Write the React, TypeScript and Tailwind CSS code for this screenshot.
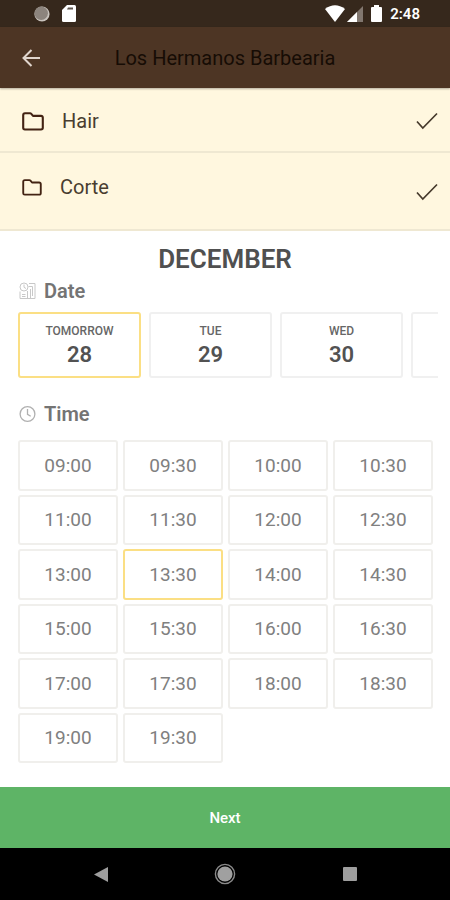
import { useState } from 'react';

const days = [
  { label: 'TOMORROW', day: '28' },
  { label: 'TUE', day: '29' },
  { label: 'WED', day: '30' },
];

const times = [
  '09:00', '09:30', '10:00', '10:30',
  '11:00', '11:30', '12:00', '12:30',
  '13:00', '13:30', '14:00', '14:30',
  '15:00', '15:30', '16:00', '16:30',
  '17:00', '17:30', '18:00', '18:30',
  '19:00', '19:30',
];

function FolderIcon({ className }: { className: string }) {
  return (
    <svg viewBox="0 0 22 19" className={className} fill="none" stroke="#432313" strokeWidth="2.1" strokeLinejoin="round">
      <path d="M1.2 3.2V15.8Q1.2 17.5 2.9 17.5H19Q20.8 17.5 20.8 15.8V5.6Q20.8 3.9 19 3.9H11L9.3 1.9Q8.8 1.3 8 1.3H3Q1.2 1.3 1.2 3.2Z" />
    </svg>
  );
}

function CheckIcon() {
  return (
    <svg viewBox="0 0 22 18" className="h-[18px] w-[22px]" fill="none" stroke="#463a2c" strokeWidth="1.7">
      <path d="M1 9.5 6.8 16 21 1.5" />
    </svg>
  );
}

function CalendarIcon() {
  return (
    <svg viewBox="0 0 18 18" className="size-[18px]" fill="none" stroke="#c8c8c8" strokeWidth="1">
      <circle cx="6" cy="5" r="4" />
      <path d="M6 2.5V5.3L8 6.5M11 1.5H17V16.5H2V9.5M4 12.5H7.5M4 14.5H7.5M9.5 9V16M12.5 7V16M10.5 4.5H14.5M14.5 4.5V14" />
    </svg>
  );
}

function ClockIcon() {
  return (
    <svg viewBox="0 0 18 18" className="size-[18px]" fill="none" stroke="#b0b0b0" strokeWidth="1.3">
      <circle cx="9.5" cy="9" r="7.4" />
      <path d="M9.5 4V9.3L12.7 11.3" />
    </svg>
  );
}

function StatusBar() {
  return (
    <div className="flex h-[27px] items-center justify-between bg-[#36281c] pr-[30px] pl-[34px]">
      <div className="flex items-center gap-3">
        <svg viewBox="0 0 16 16" className="size-4">
          <circle cx="8" cy="8" r="7.6" fill="#c9c3bd" />
          <circle cx="7.2" cy="7.2" r="6.7" fill="#8c847d" />
        </svg>
        <svg viewBox="0 0 14 17" className="h-[17px] w-[14px]">
          <path d="M5 0H12.5Q14 0 14 1.5V15.5Q14 17 12.5 17H1.5Q0 17 0 15.5V5Z" fill="#fff" />
          <path d="M6 2.5H11V4.5H5Z" fill="#5e554d" />
        </svg>
      </div>
      <div className="flex items-center">
        <svg viewBox="0 0 20 17" className="h-[17px] w-5" fill="#fff">
          <path d="M0 4Q10-3.5 20 4L10 17Z" />
        </svg>
        <svg viewBox="0 0 16 16" className="ml-[2px] size-4">
          <path d="M16 0V16H0Z" fill="#81776f" />
          <path d="M10 6V16H0Z" fill="#fff" />
        </svg>
        <svg viewBox="0 0 11 17" className="ml-2 h-[17px] w-[11px]" fill="#fff">
          <path d="M3 0H8V2H10Q11 2 11 3V16Q11 17 10 17H1Q0 17 0 16V3Q0 2 1 2H3Z" />
        </svg>
        <span className="ml-2 pt-[2px] text-[15px] font-semibold text-white">2:48</span>
      </div>
    </div>
  );
}

function NavBar() {
  return (
    <nav className="grid h-[52px] grid-cols-[1fr_50px_1fr] items-center bg-black">
      <button type="button" aria-label="Back" className="mr-[92px] justify-self-end">
        <svg viewBox="0 0 14 15" className="h-[15px] w-[14px]" fill="#9e9e9e">
          <path d="M14 0V15L0 7.5Z" />
        </svg>
      </button>
      <button type="button" aria-label="Home" className="justify-self-center">
        <svg viewBox="0 0 22 22" className="size-[22px]">
          <circle cx="11" cy="11" r="9.6" fill="none" stroke="#8a8a8a" strokeWidth="1.4" />
          <circle cx="11" cy="11" r="7.6" fill="#a0a0a0" />
        </svg>
      </button>
      <button type="button" aria-label="Recent apps" className="ml-[93px] justify-self-start">
        <svg viewBox="0 0 14 14" className="size-[14px]" fill="#9e9e9e">
          <rect width="14" height="14" rx="1" />
        </svg>
      </button>
    </nav>
  );
}

export default function App() {
  const [selectedDay, setSelectedDay] = useState('28');
  const [selectedTime, setSelectedTime] = useState('13:30');

  return (
    <div className="flex min-h-screen flex-col bg-white font-[Roboto,sans-serif]">
      <StatusBar />

      <header className="relative z-10 grid h-[61px] grid-cols-[62px_1fr_62px] items-center bg-[#4d3524] shadow-[0_1px_2px_rgba(0,0,0,0.3)]">
        <button type="button" aria-label="Go back" className="pl-[22px]">
          <svg viewBox="0 0 18 18" className="size-[18px]" fill="none" stroke="#e0d5cd" strokeWidth="2">
            <path d="M18 9H1.8M9.5 1 1.5 9 9.5 17" />
          </svg>
        </button>
        <h1 className="text-center text-xl text-[#160c05]">Los Hermanos Barbearia</h1>
      </header>

      {/* Chosen category and service */}
      <div className="flex h-[65px] items-center border-b-2 border-[#efe8d2] bg-[#fff7df] pt-[3px] pr-3 pl-[22px]">
        <FolderIcon className="h-[19px] w-[22px]" />
        <span className="ml-[18px] flex-1 text-xl text-[#493d30]">Hair</span>
        <CheckIcon />
      </div>
      <div className="flex h-[78px] items-center border-b-2 border-[#efe8d2] bg-[#fff7df] pt-[2px] pr-3 pl-[22px]">
        <div className="flex flex-1 items-center pb-[10px]">
          <FolderIcon className="h-[17px] w-5" />
          <span className="ml-[18px] text-xl text-[#493d30]">Corte</span>
        </div>
        <CheckIcon />
      </div>

      <main className="flex flex-1 flex-col pt-3 pb-6 pl-[18px]">
        <h2 className="pr-[18px] text-center text-[26px] leading-8 font-semibold text-[#505050]">DECEMBER</h2>

        <div className="mt-1 flex h-6 items-center gap-2">
          <CalendarIcon />
          <h3 className="text-xl font-semibold text-[#747474]">Date</h3>
        </div>
        <div className="mt-[9px] mr-3 flex gap-2 overflow-hidden">
          {days.map(({ label, day }) => (
            <button
              key={day}
              type="button"
              onClick={() => setSelectedDay(day)}
              className={`flex h-[66px] w-[123px] shrink-0 flex-col items-center justify-center rounded-[3px] border-2 pt-1 ${
                selectedDay === day ? 'border-[#fbdf84]' : 'border-[#f0f0f0]'
              }`}
            >
              <span className="text-xs leading-4 font-medium text-[#666666]">{label}</span>
              <span className="text-[22px] leading-8 font-semibold text-[#525252]">{day}</span>
            </button>
          ))}
          <button
            type="button"
            aria-label="More days"
            className="h-[66px] w-[123px] shrink-0 rounded-[3px] border-2 border-[#f0f0f0]"
          />
        </div>

        <div className="mt-6 flex h-6 items-center gap-2">
          <ClockIcon />
          <h3 className="text-xl font-semibold text-[#747474]">Time</h3>
        </div>
        <div className="mt-[14px] mr-[17px] grid flex-1 auto-rows-fr grid-cols-4 gap-x-[5px] gap-y-1">
          {times.map((time) => (
            <button
              key={time}
              type="button"
              onClick={() => setSelectedTime(time)}
              className={`rounded-[3px] border-2 pt-px text-[19px] text-[#808080] ${
                selectedTime === time ? 'border-[#fbdf84]' : 'border-[#f0efec]'
              }`}
            >
              {time}
            </button>
          ))}
        </div>
      </main>

      <button type="button" className="h-[61px] bg-[#5eb466] pt-px text-[15px] font-medium text-white">
        Next
      </button>
      <NavBar />
    </div>
  );
}
